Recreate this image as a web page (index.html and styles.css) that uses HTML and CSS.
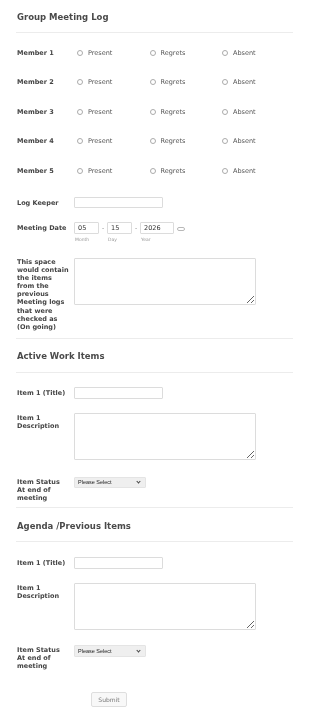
FILE: index.html
```html
<!DOCTYPE html>
<html lang="en">
<head>
  <meta charset="UTF-8">
  <meta name="viewport" content="width=device-width, initial-scale=1">
  <title>Group Meeting Log</title>
  <link rel="stylesheet" href="styles.css">
</head>
<body>
<form class="form" onsubmit="return false;">
  <div class="header">
    <h2>Group Meeting Log</h2>
  </div>

  <div class="member-row">
    <label class="label">Member 1</label>
    <div class="options">
      <span class="option"><span class="radio"></span>Present</span>
      <span class="option"><span class="radio"></span>Regrets</span>
      <span class="option"><span class="radio"></span>Absent</span>
    </div>
  </div>
  <div class="member-row">
    <label class="label">Member 2</label>
    <div class="options">
      <span class="option"><span class="radio"></span>Present</span>
      <span class="option"><span class="radio"></span>Regrets</span>
      <span class="option"><span class="radio"></span>Absent</span>
    </div>
  </div>
  <div class="member-row">
    <label class="label">Member 3</label>
    <div class="options">
      <span class="option"><span class="radio"></span>Present</span>
      <span class="option"><span class="radio"></span>Regrets</span>
      <span class="option"><span class="radio"></span>Absent</span>
    </div>
  </div>
  <div class="member-row">
    <label class="label">Member 4</label>
    <div class="options">
      <span class="option"><span class="radio"></span>Present</span>
      <span class="option"><span class="radio"></span>Regrets</span>
      <span class="option"><span class="radio"></span>Absent</span>
    </div>
  </div>
  <div class="member-row">
    <label class="label">Member 5</label>
    <div class="options">
      <span class="option"><span class="radio"></span>Present</span>
      <span class="option"><span class="radio"></span>Regrets</span>
      <span class="option"><span class="radio"></span>Absent</span>
    </div>
  </div>

  <div class="row row-keeper">
    <label class="label label-mid">Log Keeper</label>
    <input class="text" type="text">
  </div>

  <div class="row row-date">
    <label class="label label-mid">Meeting Date</label>
    <div class="date">
      <div class="date-part">
        <input class="text small" type="text" value="05">
        <span class="sub">Month</span>
      </div>
      <span class="dash">-</span>
      <div class="date-part">
        <input class="text small" type="text" value="15">
        <span class="sub">Day</span>
      </div>
      <span class="dash">-</span>
      <div class="date-part">
        <input class="text year" type="text" value="2026">
        <span class="sub">Year</span>
      </div>
      <span class="calendar"></span>
    </div>
  </div>

  <div class="row row-notes divided">
    <label class="label">This space would contain the items from the previous Meeting logs that were checked as (On going)</label>
    <textarea class="area"></textarea>
  </div>

  <div class="section">
    <h2>Active Work Items</h2>
  </div>

  <div class="row row-title">
    <label class="label label-mid">Item 1 (Title)</label>
    <input class="text" type="text">
  </div>
  <div class="row row-desc">
    <label class="label label-top">Item 1 Description</label>
    <textarea class="area"></textarea>
  </div>
  <div class="row row-status divided">
    <label class="label label-top">Item Status At end of meeting</label>
    <span class="select-wrap">
      <select class="select">
        <option>Please Select</option>
      </select>
    </span>
  </div>

  <div class="section section-2">
    <h2>Agenda /Previous Items</h2>
  </div>

  <div class="row row-title-2">
    <label class="label label-mid">Item 1 (Title)</label>
    <input class="text" type="text">
  </div>
  <div class="row row-desc">
    <label class="label label-top">Item 1 Description</label>
    <textarea class="area"></textarea>
  </div>
  <div class="row row-status-2">
    <label class="label label-top">Item Status At end of meeting</label>
    <span class="select-wrap">
      <select class="select">
        <option>Please Select</option>
      </select>
    </span>
  </div>

  <div class="buttons">
    <button class="submit">Submit</button>
  </div>
</form>
</body>
</html>
```

FILE: styles.css
```css
html, body {
  margin: 0;
  padding: 0;
  background: #fff;
  font-family: "DejaVu Sans", Verdana, sans-serif;
  color: #555;
}
.form {
  padding: 0 17px 0 16px;
  transform: translateZ(0);
}
h2 {
  margin: 0;
  font-size: 8.5px;
  line-height: 10px;
  font-weight: 700;
  color: #4a4a4a;
}
.header {
  padding: 12px 1px 10px;
  border-bottom: 1px solid #ececec;
}
.section {
  padding: 12px 1px 11px;
  border-bottom: 1px solid #ececec;
}
.section-2 {
  padding: 13px 1px 10px;
}
.divided {
  border-bottom: 1px solid #ececec;
}
.label {
  flex: 0 0 53px;
  width: 53px;
  margin-right: 4px;
  padding-left: 1px;
  font-size: 6.5px;
  line-height: 8.1px;
  font-weight: 700;
  color: #444;
}
.label-mid {
  padding-top: 2px;
}
.label-top {
  padding-top: 1px;
}

/* Участники */
.member-row {
  display: flex;
  align-items: center;
  padding: 16px 0 5.5px;
  height: 8px;
}
.options {
  display: flex;
  margin-top: -1px;
}
.option {
  display: flex;
  align-items: center;
  width: 72.5px;
  font-size: 6.5px;
  line-height: 8px;
  color: #555;
}
.radio {
  width: 4px;
  height: 4px;
  margin: 0 5px 0 3px;
  border: 1px solid #aaa;
  border-radius: 50%;
}

/* Строки полей */
.row {
  display: flex;
  align-items: flex-start;
}
.row-keeper {
  padding-top: 16.5px;
}
.row-date {
  padding-top: 14px;
}
.row-notes {
  padding: 16px 0 7px;
}
.row-title {
  padding-top: 14px;
}
.row-title-2 {
  padding-top: 15px;
}
.row-desc {
  padding-top: 14px;
}
.row-status {
  padding: 17px 0 5px;
}
.row-status-2 {
  padding-top: 15px;
}
.text {
  box-sizing: border-box;
  width: 89px;
  height: 11px;
  margin: 0;
  padding: 0 3px;
  border: 1px solid #dcdcdc;
  border-radius: 1px;
  font-family: inherit;
  font-size: 6.5px;
  color: #333;
  outline: none;
}
.row-date .text,
.row-title .text,
.row-title-2 .text {
  height: 12px;
}
.text.small {
  width: 25px;
}
.text.year {
  width: 34px;
}
.date {
  display: flex;
  align-items: flex-start;
}
.date-part {
  display: flex;
  flex-direction: column;
}
.sub {
  margin-top: 3px;
  padding-left: 1px;
  font-size: 4.5px;
  line-height: 5px;
  color: #999;
}
.dash {
  width: 8px;
  text-align: center;
  font-size: 6px;
  line-height: 12px;
  color: #888;
}
.calendar {
  width: 6px;
  height: 2px;
  margin: 4.5px 0 0 3px;
  border: 1px solid #b8b8b8;
  border-radius: 2px;
}
.area {
  box-sizing: border-box;
  width: 182px;
  height: 47px;
  margin: 0;
  padding: 2px;
  border: 1px solid #dcdcdc;
  border-radius: 1px;
  font-family: inherit;
  font-size: 6.5px;
  resize: both;
  outline: none;
}
.select-wrap {
  position: relative;
  display: block;
}
.select-wrap::after {
  content: "";
  position: absolute;
  right: 6px;
  top: 3px;
  width: 2px;
  height: 2px;
  border-right: 1px solid #444;
  border-bottom: 1px solid #444;
  transform: rotate(45deg);
  pointer-events: none;
}
.select {
  display: block;
  box-sizing: border-box;
  width: 72px;
  height: 11px;
  margin: 0;
  padding: 0 3px;
  border: 1px solid #e4e4e4;
  border-radius: 1px;
  background: #efefef;
  font-family: "Liberation Sans", Arial, sans-serif;
  font-size: 5.5px;
  color: #222;
  appearance: none;
  -webkit-appearance: none;
}
.row-status-2 .select {
  height: 12px;
}
.row-status-2 .select-wrap::after {
  top: 3.5px;
}
.buttons {
  padding: 17px 0 11px 75px;
}
.submit {
  box-sizing: border-box;
  width: 36px;
  height: 15px;
  padding: 0;
  border: 1px solid #dedede;
  border-radius: 2px;
  background: #f8f8f8;
  font-family: inherit;
  font-size: 6px;
  color: #777;
  cursor: pointer;
}
```
